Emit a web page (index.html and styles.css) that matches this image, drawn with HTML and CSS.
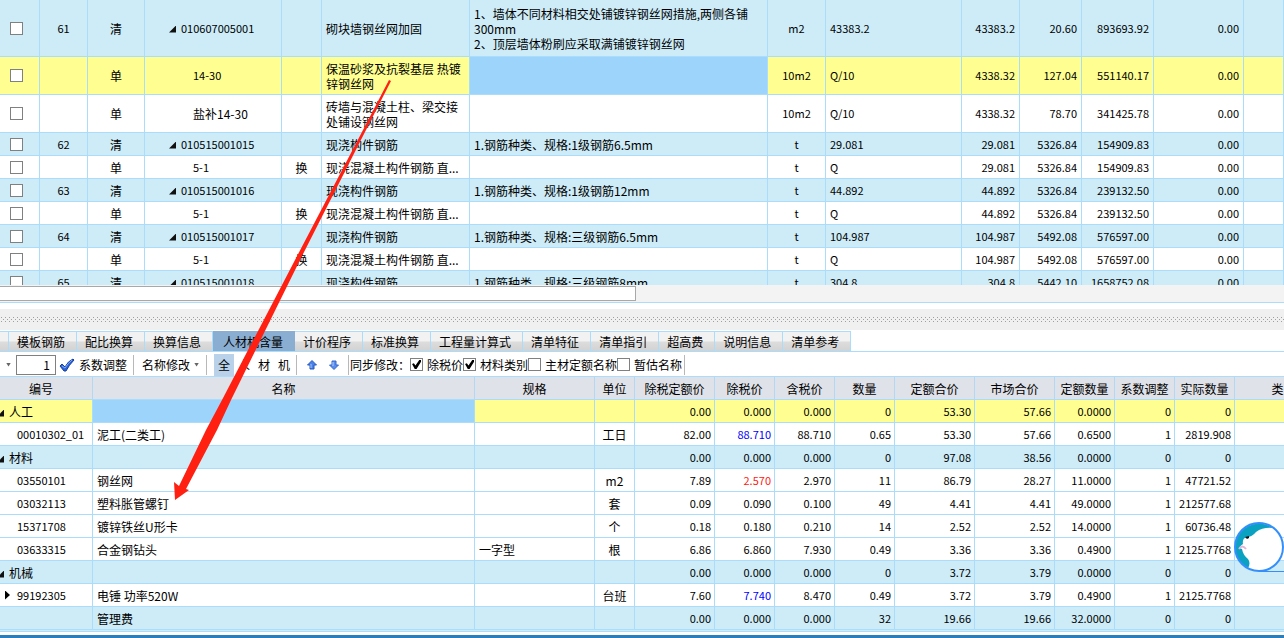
FILE: index.html
```html
<!DOCTYPE html>
<html lang="zh-CN">
<head>
<meta charset="utf-8">
<title>清单计价</title>
<link rel="stylesheet" href="styles.css">
</head>
<body>
<main class="app">
  <div class="bill-pane">
    <table class="grid bill">
      <colgroup><col class="w40"><col class="w48"><col class="w57"><col class="w137"><col class="w40"><col class="w148"><col><col class="w58"><col class="w136"><col class="w58"><col class="w62"><col class="w72"><col class="w90"><col class="w40"></colgroup>
      <tbody>
        <tr class="item first"><td><input type="checkbox" class="tick" aria-label="选择 61"></td><td>61</td><td>清</td><td class="parent">010607005001</td><td></td><td>砌块墙钢丝网加固</td><td>1、墙体不同材料相交处铺镀锌钢丝网措施,两侧各铺300mm<br>2、顶层墙体粉刷应采取满铺镀锌钢丝网</td><td>m2</td><td>43383.2</td><td>43383.2</td><td>20.60</td><td>893693.92</td><td>0.00</td><td></td></tr>
        <tr class="current tall"><td><input type="checkbox" class="tick" aria-label="选择 14-30"></td><td></td><td>单</td><td>14-30</td><td></td><td>保温砂浆及抗裂基层 热镀锌钢丝网</td><td class="selected"></td><td>10m2</td><td>Q/10</td><td>4338.32</td><td>127.04</td><td>551140.17</td><td>0.00</td><td></td></tr>
        <tr class="tall"><td><input type="checkbox" class="tick" aria-label="选择 盐补14-30"></td><td></td><td>单</td><td class="mixed">盐补14-30</td><td></td><td>砖墙与混凝土柱、梁交接处铺设钢丝网</td><td></td><td>10m2</td><td>Q/10</td><td>4338.32</td><td>78.70</td><td>341425.78</td><td>0.00</td><td></td></tr>
        <tr class="item"><td><input type="checkbox" class="tick" aria-label="选择 62"></td><td>62</td><td>清</td><td class="parent">010515001015</td><td></td><td>现浇构件钢筋</td><td>1.钢筋种类、规格:1级钢筋6.5mm</td><td>t</td><td>29.081</td><td>29.081</td><td>5326.84</td><td>154909.83</td><td>0.00</td><td></td></tr>
        <tr><td><input type="checkbox" class="tick" aria-label="选择 62 子目"></td><td></td><td>单</td><td>5-1</td><td>换</td><td>现浇混凝土构件钢筋 直...</td><td></td><td>t</td><td>Q</td><td>29.081</td><td>5326.84</td><td>154909.83</td><td>0.00</td><td></td></tr>
        <tr class="item"><td><input type="checkbox" class="tick" aria-label="选择 63"></td><td>63</td><td>清</td><td class="parent">010515001016</td><td></td><td>现浇构件钢筋</td><td>1.钢筋种类、规格:1级钢筋12mm</td><td>t</td><td>44.892</td><td>44.892</td><td>5326.84</td><td>239132.50</td><td>0.00</td><td></td></tr>
        <tr><td><input type="checkbox" class="tick" aria-label="选择 63 子目"></td><td></td><td>单</td><td>5-1</td><td>换</td><td>现浇混凝土构件钢筋 直...</td><td></td><td>t</td><td>Q</td><td>44.892</td><td>5326.84</td><td>239132.50</td><td>0.00</td><td></td></tr>
        <tr class="item"><td><input type="checkbox" class="tick" aria-label="选择 64"></td><td>64</td><td>清</td><td class="parent">010515001017</td><td></td><td>现浇构件钢筋</td><td>1.钢筋种类、规格:三级钢筋6.5mm</td><td>t</td><td>104.987</td><td>104.987</td><td>5492.08</td><td>576597.00</td><td>0.00</td><td></td></tr>
        <tr><td><input type="checkbox" class="tick" aria-label="选择 64 子目"></td><td></td><td>单</td><td>5-1</td><td>换</td><td>现浇混凝土构件钢筋 直...</td><td></td><td>t</td><td>Q</td><td>104.987</td><td>5492.08</td><td>576597.00</td><td>0.00</td><td></td></tr>
        <tr class="item"><td><input type="checkbox" class="tick" aria-label="选择 65"></td><td>65</td><td>清</td><td class="parent">010515001018</td><td></td><td>现浇构件钢筋</td><td>1.钢筋种类、规格:三级钢筋8mm</td><td>t</td><td>304.8</td><td>304.8</td><td>5442.10</td><td>1658752.08</td><td>0.00</td><td></td></tr>
      </tbody>
    </table>
  </div>
  <div class="scrollbar"><div class="thumb"></div></div>
  <div class="splitter">
    <svg class="dots" width="100%" height="7" aria-hidden="true">
      <defs><pattern id="dot" width="4" height="4" patternUnits="userSpaceOnUse"><path d="M1 1h1v1h-1zM3 3h1v1h-1z" fill="#a0a0a0"/></pattern></defs>
      <rect width="100%" height="7" fill="url(#dot)"/>
    </svg>
  </div>
  <nav class="tabs">
    <button>模板钢筋</button><button>配比换算</button><button>换算信息</button><button class="active">人材机含量</button><button>计价程序</button><button>标准换算</button><button>工程量计算式</button><button>清单特征</button><button>清单指引</button><button>超高费</button><button>说明信息</button><button>清单参考</button>
  </nav>
  <div class="toolbar">
    <div class="group coefficient">
      <span class="caret"></span>
      <input type="text" class="number" value="1" aria-label="系数">
      <button class="plain">
        <svg width="16" height="14" viewBox="0 0 16 14" aria-hidden="true"><path d="M1 8L3 6L6 9Q9 3 14 1L15 2Q10 7 7 13H5Z" fill="#2b63d9" stroke="#173f9c" stroke-width="1"/><path d="M3 8L6 10Q9 5 13 2" fill="none" stroke="#7eabff"/></svg>
        系数调整
      </button>
    </div>
    <div class="group"><button class="plain rename">名称修改<span class="caret"></span></button></div>
    <div class="group filters"><button class="on">全</button><button>人</button><button>材</button><button>机</button></div>
    <div class="group moves">
      <button aria-label="上移"><svg width="10" height="10" viewBox="0 0 10 10"><path d="M5 .5L9.500 5H7V9H3V5H.5Z" fill="#4b82e8" stroke="#2458bf"/><path d="M4 4v4" stroke="#a5c7ff"/></svg></button>
      <button aria-label="下移"><svg width="10" height="10" viewBox="0 0 10 10"><path d="M5 9.500L.5 5H3V1H7V5H9.500Z" fill="#5b8eec" stroke="#3467cc"/><path d="M4 2v4" stroke="#b3d0ff"/></svg></button>
    </div>
    <div class="group sync">
      <span>同步修改：</span>
      <label><input type="checkbox" class="tick" checked>除税价</label>
      <label><input type="checkbox" class="tick" checked>材料类别</label>
      <label><input type="checkbox" class="tick">主材定额名称</label>
      <label><input type="checkbox" class="tick">暂估名称</label>
    </div>
  </div>
  <div class="content-pane">
    <table class="grid content">
      <colgroup><col class="w93"><col><col class="w120"><col class="w40"><col class="w80"><col class="w60"><col class="w60"><col class="w60"><col class="w80"><col class="w80"><col class="w60"><col class="w60"><col class="w60"><col class="w98"></colgroup>
      <thead>
        <tr><th class="code">编号</th><th>名称</th><th>规格</th><th>单位</th><th>除税定额价</th><th>除税价</th><th>含税价</th><th>数量</th><th>定额合价</th><th>市场合价</th><th>定额数量</th><th>系数调整</th><th>实际数量</th><th>类别</th></tr>
      </thead>
      <tbody>
        <tr class="current"><td class="group-name">人工</td><td class="selected"></td><td></td><td></td><td>0.00</td><td>0.000</td><td>0.000</td><td>0</td><td>53.30</td><td>57.66</td><td>0.0000</td><td>0</td><td>0</td><td></td></tr>
        <tr><td>00010302_01</td><td>泥工(二类工)</td><td></td><td>工日</td><td>82.00</td><td class="blue">88.710</td><td>88.710</td><td>0.65</td><td>53.30</td><td>57.66</td><td>0.6500</td><td>1</td><td>2819.908</td><td></td></tr>
        <tr class="item"><td class="group-name">材料</td><td></td><td></td><td></td><td>0.00</td><td>0.000</td><td>0.000</td><td>0</td><td>97.08</td><td>38.56</td><td>0.0000</td><td>0</td><td>0</td><td></td></tr>
        <tr><td>03550101</td><td>钢丝网</td><td></td><td>m2</td><td>7.89</td><td class="red">2.570</td><td>2.970</td><td>11</td><td>86.79</td><td>28.27</td><td>11.0000</td><td>1</td><td>47721.52</td><td></td></tr>
        <tr><td>03032113</td><td>塑料胀管螺钉</td><td></td><td>套</td><td>0.09</td><td>0.090</td><td>0.100</td><td>49</td><td>4.41</td><td>4.41</td><td>49.0000</td><td>1</td><td>212577.68</td><td></td></tr>
        <tr><td>15371708</td><td>镀锌铁丝U形卡</td><td></td><td>个</td><td>0.18</td><td>0.180</td><td>0.210</td><td>14</td><td>2.52</td><td>2.52</td><td>14.0000</td><td>1</td><td>60736.48</td><td></td></tr>
        <tr><td>03633315</td><td>合金钢钻头</td><td>一字型</td><td>根</td><td>6.86</td><td>6.860</td><td>7.930</td><td>0.49</td><td>3.36</td><td>3.36</td><td>0.4900</td><td>1</td><td>2125.7768</td><td></td></tr>
        <tr class="item"><td class="group-name">机械</td><td></td><td></td><td></td><td>0.00</td><td>0.000</td><td>0.000</td><td>0</td><td>3.72</td><td>3.79</td><td>0.0000</td><td>0</td><td>0</td><td></td></tr>
        <tr><td class="closed">99192305</td><td>电锤 功率520W</td><td></td><td>台班</td><td>7.60</td><td class="blue">7.740</td><td>8.470</td><td>0.49</td><td>3.72</td><td>3.79</td><td>0.4900</td><td>1</td><td>2125.7768</td><td></td></tr>
        <tr class="item"><td></td><td>管理费</td><td></td><td></td><td>0.00</td><td>0.000</td><td>0.000</td><td>32</td><td>19.66</td><td>19.66</td><td>32.0000</td><td>0</td><td>0</td><td></td></tr>
      </tbody>
    </table>
    <div class="next-row"></div>
  </div>
  <footer class="status"></footer>
  <svg class="arrow" width="400" height="510" viewBox="0 0 400 510" aria-hidden="true"><path d="M389 80L391 81L366 130L300 260L231 400L217 430L186 489L189 490L175 500L174 482L179 486L206 430L222 400L295 260L363 130Z" fill="#ff2012"/></svg>
  <svg class="mascot" width="50" height="50" viewBox="0 0 50 50" role="img" aria-label="助手">
    <circle cx="25" cy="25" r="24" fill="#fff"/>
    <path d="M39 6A24 24 0 0 0 1 25A24 24 0 0 0 14 46Q17 41 14 37Q9 33 8 27L5 26Q7 23 9 22Q8 16 13 15Q18 15 22 10Q29 5 39 6Z" fill="#0ba2c2"/>
    <path d="M5 27Q8 22 12 27" fill="none" stroke="#e1b6d5" stroke-width="2"/>
    <path d="M11 15l4-1v2l-2 1z" fill="#111"/>
    <circle cx="25" cy="25" r="24" fill="none" stroke="#348ffc" stroke-width="2"/>
    <path d="M25 49.500H50" stroke="#348ffc"/>
  </svg>
</main>
</body>
</html>
```
FILE: styles.css
```css
* { box-sizing: border-box; }

body {
  margin: 0;
  background: #fff;
  color: #000;
  font-family: "Noto Sans CJK SC", sans-serif;
  font-size: 12px;
  line-height: 15px;
}

button, input {
  margin: 0;
  font: inherit;
  color: inherit;
}

button {
  padding: 0;
  border: 0;
  background: none;
  white-space: nowrap;
}

.app {
  position: relative;
  overflow: hidden;
}

.grid {
  width: 100%;
  table-layout: fixed;
  border-collapse: separate;
  border-spacing: 0;
}

.grid td, .grid th {
  height: 23px;
  padding: 0 4px;
  border-right: 1px solid #aadcfb;
  border-bottom: 1px solid #aadcfb;
  overflow: hidden;
  font-weight: 400;
  text-align: left;
}

.w40 { width: 40px; }
.w48 { width: 48px; }
.w57 { width: 57px; }
.w58 { width: 58px; }
.w60 { width: 60px; }
.w62 { width: 62px; }
.w72 { width: 72px; }
.w80 { width: 80px; }
.w90 { width: 90px; }
.w93 { width: 93px; }
.w98 { width: 98px; }
.w120 { width: 120px; }
.w136 { width: 136px; }
.w137 { width: 137px; }
.w148 { width: 148px; }

.grid .item { background: #cdecf8; }
.grid .current { background: #ffff91; }
.grid .selected { background: #9dd4fc; }
.grid .blue { color: #00f; }
.grid .red { color: #ff2012; }

/* bill of quantities */
.bill-pane {
  height: 285px;
  overflow: hidden;
}

.bill .first td { height: 57px; }
.bill .tall td { height: 38px; }
.bill td:nth-child(1) { padding-left: 10px; }

.bill td:nth-child(2),
.bill td:nth-child(3),
.bill td:nth-child(5),
.bill td:nth-child(8) { text-align: center; }

.bill td:nth-child(4) { padding-left: 48px; }
.bill td.parent { padding-left: 24px; }
.bill td:nth-child(6) { padding-right: 0; }
.bill td:nth-child(2),
.bill td:nth-child(4),
.bill td:nth-child(n+8) { font-size: 11px; }
.bill td.mixed { font-size: 12px; }
.bill td:nth-child(n+10) { text-align: right; }

.parent::before,
.group-name::before {
  content: "";
  display: inline-block;
  width: 7px;
  height: 7px;
  margin-right: 5px;
  background: #111;
  clip-path: polygon(100% 0, 100% 100%, 0 100%);
}

.tick {
  appearance: none;
  display: block;
  flex: none;
  width: 13px;
  height: 13px;
  border: 1px solid #808080;
  background: #fff;
}

.tick:checked::before {
  content: "";
  display: block;
  width: 9px;
  height: 9px;
  margin: 1px;
  background: #000;
  clip-path: polygon(0 45%, 20% 35%, 38% 60%, 80% 0, 100% 0, 100% 20%, 50% 100%, 30% 100%);
}

.scrollbar {
  height: 18px;
  padding-top: 1px;
  border-bottom: 1px solid #aadcfb;
  background: #f3f3f3;
}

.thumb {
  width: 636px;
  height: 15px;
  border: 1px solid #a8a8a8;
  border-left: 0;
  background: #fff;
}

.splitter {
  height: 21px;
  margin-top: 6px;
  padding-top: 7px;
  background: #f0f0f0;
}

.dots { display: block; }

/* detail tabs */
.tabs {
  display: flex;
  height: 21px;
  margin-top: 1px;
  border-bottom: 1px solid #aadcfb;
}

.tabs::before {
  content: "";
  width: 8px;
}

.tabs::before,
.tabs button {
  border-top: 1px solid #aadcfb;
  border-right: 1px solid #aadcfb;
  background: linear-gradient(#f2f2f2 0 45%, #dcdcdc 55%, #d2d2d2);
}

.tabs button {
  padding: 0 11px 0 8px;
}

.tabs .active {
  padding: 0 11px 0 10px;
  border-color: #8aaed2;
  background: #8aaed2;
}

/* toolbar */
.toolbar {
  display: flex;
  align-items: center;
  height: 24px;
  padding-top: 1px;
}

.group {
  display: flex;
  align-items: center;
  height: 20px;
  border-right: 1px solid #b8b8b8;
}

.caret {
  width: 5px;
  height: 4px;
  background: #666;
  clip-path: polygon(0 0, 100% 0, 50% 100%);
}

.coefficient {
  padding: 0 6px;
}

.number {
  width: 40px;
  height: 20px;
  margin: 0 3px 0 5px;
  padding: 0 5px;
  border: 1px solid #808080;
  background: #fff;
  text-align: right;
}

.plain {
  display: flex;
  align-items: center;
  gap: 4px;
}

.rename { padding: 0 7px 0 8px; }

.filters { padding: 0 2px 0 7px; }

.filters button {
  width: 20px;
  height: 22px;
}

.filters .on { background: #b9d2e9; }

.moves {
  gap: 12px;
  padding: 0 9px 0 10px;
}

.moves svg { display: block; }

.sync {
  padding: 0 2px 0 1px;
}

.sync label {
  display: flex;
  align-items: center;
  gap: 4px;
}

/* labour, material and machine content */
.content-pane {
  border-top: 1px solid #aadcfb;
  overflow: hidden;
}

.content { width: calc(100% + 49px); }

.grid th {
  padding: 0;
  background: #dfe2e8;
  border-right-color: #b4d8f2;
  text-align: center;
}

.grid .code { padding-right: 10px; }

.content td:nth-child(1) {
  padding-left: 17px;
  font-size: 11px;
}

.content td.group-name {
  padding-left: 0;
  font-size: 12px;
}

.group-name::before { margin-left: -3px; }

.content td.closed { padding-left: 5px; }

.closed::before {
  content: "";
  display: inline-block;
  width: 5px;
  height: 9px;
  margin-right: 7px;
  background: #000;
  clip-path: polygon(0 0, 100% 50%, 0 100%);
}

.content td:nth-child(4) { text-align: center; }

.content td:nth-child(n+5) {
  padding-right: 3px;
  font-size: 11px;
  text-align: right;
}

.next-row {
  height: 2px;
  border-bottom: 1px solid #aadcfb;
  background: #cdecf8;
}

.status {
  height: 3px;
  margin-top: 3px;
  background: #2a7ebb;
}

/* annotation and floating helper */
.arrow {
  position: absolute;
  top: 0;
  left: 0;
  pointer-events: none;
}

.mascot {
  position: absolute;
  top: 522px;
  right: 0;
}
```
